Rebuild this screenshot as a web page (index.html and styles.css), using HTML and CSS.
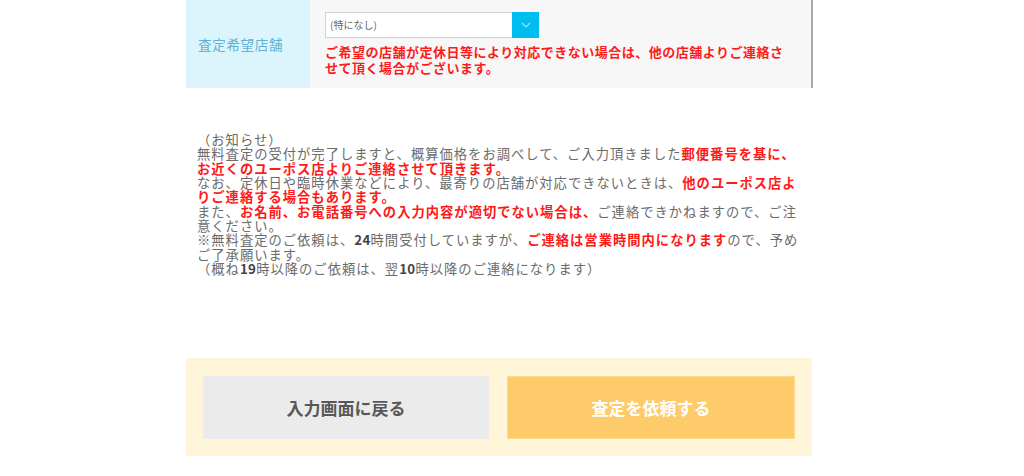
FILE: index.html
```html
<!DOCTYPE html>
<html lang="ja">
<head>
<meta charset="utf-8">
<link rel="stylesheet" href="styles.css">
</head>
<body>
<div class="wrap">
  <table class="form">
    <tr>
      <th>査定希望店舗</th>
      <td>
        <div class="select">
          <span class="select-text">(特になし)</span>
          <span class="select-btn"><svg width="10" height="6" viewBox="0 0 10 6"><path d="M1 1 L5 5 L9 1" fill="none" stroke="#9fe0f7" stroke-width="1.2"/></svg></span>
        </div>
        <p class="warn">ご希望の店舗が定休日等により対応できない場合は、他の店舗よりご連絡させて頂く場合がございます。</p>
      </td>
    </tr>
  </table>

  <div class="notice">
    <p>（お知らせ）<br>無料査定の受付が完了しますと、概算価格をお調べして、ご入力頂きました<strong>郵便番号を基に、お近くのユーポス店よりご連絡させて頂きます。</strong><br>なお、定休日や臨時休業などにより、最寄りの店舗が対応できないときは、<strong>他のユーポス店よりご連絡する場合もあります。</strong><br>また、<strong>お名前、お電話番号への入力内容が適切でない場合は、</strong>ご連絡できかねますので、ご注意ください。<br>※無料査定のご依頼は、<b class="num">24</b>時間受付していますが、<strong>ご連絡は営業時間内になります</strong>ので、予めご了承願います。<br>（概ね<b class="num">19</b>時以降のご依頼は、翌<b class="num">10</b>時以降のご連絡になります）</p>
  </div>

  <div class="actions">
    <button class="btn btn-back">入力画面に戻る</button>
    <button class="btn btn-submit">査定を依頼する</button>
  </div>
</div>
</body>
</html>
```

FILE: styles.css
```css
html, body {
  margin: 0;
  padding: 0;
  background: #ffffff;
}
body {
  font-family: "Noto Sans CJK JP", "Noto Sans", sans-serif;
}
.wrap {
  width: 627px;
  margin-left: 186px;
}
.form {
  width: 627px;
  border-collapse: collapse;
  border-spacing: 0;
}
.form th {
  width: 124px;
  padding: 0;
  background: #dcf5fd;
  color: #5cb3d4;
  font-weight: normal;
  font-size: 13.5px;
  letter-spacing: 0.7px;
  text-align: left;
  padding-left: 12px;
  box-sizing: border-box;
  height: 88px;
  vertical-align: middle;
}
.form td {
  background: #f7f7f7;
  padding: 12px 15px 12px 15px;
  border-right: 2px solid #a9a9a9;
  vertical-align: top;
}
.select {
  display: flex;
  width: 214px;
  height: 26px;
  box-sizing: border-box;
}
.select-text {
  flex: 1;
  background: #fff;
  border: 1px solid #d2d2d2;
  border-right: none;
  font-size: 10px;
  color: #666;
  line-height: 24px;
  padding-left: 4px;
}
.select-btn {
  width: 27px;
  background: #00bdf0;
  display: flex;
  align-items: center;
  justify-content: center;
}
.warn {
  margin: 6px 0 0;
  color: #ff1a1a;
  font-weight: bold;
  font-size: 13px;
  letter-spacing: 0.5px;
  line-height: 16px;
}
.notice {
  padding: 45px 8px 0 11px;
}
.notice p {
  margin: 0;
  font-size: 13.3px;
  letter-spacing: 1px;
  line-height: 14.33px;
  color: #6b6b6b;
}
.notice strong {
  color: #ff1a1a;
  font-weight: bold;
}
.notice .num {
  color: #444;
  font-weight: bold;
  letter-spacing: 0.3px;
}
.actions {
  margin-top: 82px;
  background: #fff6da;
  padding: 18px 17px 17px;
  display: flex;
  gap: 18px;
  width: 626px;
  box-sizing: border-box;
}
.btn {
  flex: 1;
  height: 63px;
  border: none;
  font-family: "Noto Sans CJK JP", "Noto Sans", sans-serif;
  font-size: 17px;
  font-weight: bold;
  cursor: pointer;
}
.btn-back {
  background: #ebebeb;
  color: #585858;
}
.btn-submit {
  background: #fecb6b;
  color: #ffffff;
  border: 1px solid #ffd98d;
}
```
